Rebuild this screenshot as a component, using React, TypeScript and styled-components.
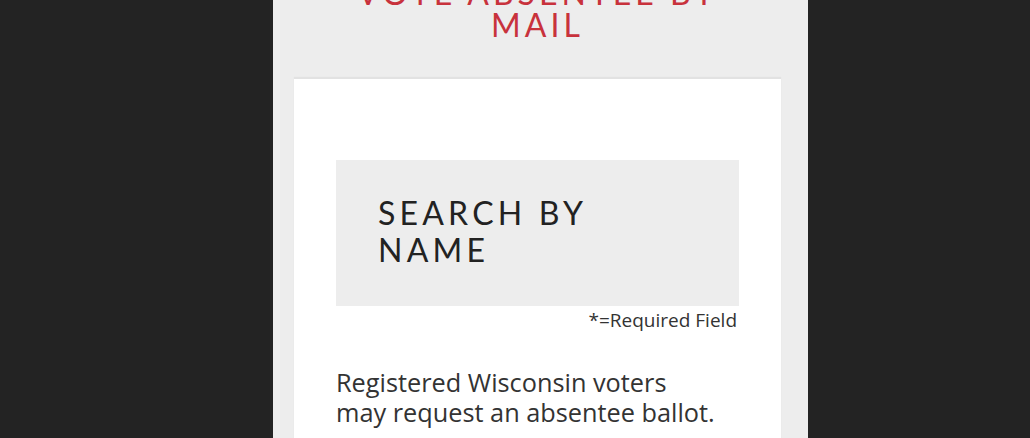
import React from "react";
import styled, { createGlobalStyle } from "styled-components";

const Global = createGlobalStyle`
  html, body { margin: 0; padding: 0; background: #232323; }
  body { height: 438px; overflow: hidden; }
`;

const Page = styled.div`
  display: flex;
  height: 438px;
  padding-left: 273px;
  background: #232323;
`;

const Column = styled.main`
  width: 535px;
  background: #ededed;
  padding: 0 27px 0 21px;
  box-sizing: border-box;
  display: flex;
  flex-direction: column;
`;

const Title = styled.h1`
  margin: -23px 0 0 0;
  font-family: "Lato", "Open Sans", sans-serif;
  font-weight: 400;
  font-size: 32px;
  line-height: 32px;
  letter-spacing: 4px;
  text-align: center;
  color: #c8323c;
`;

const Card = styled.section`
  margin-top: 36px;
  background: #fff;
  border-top: 2px solid #e2e2e2;
  box-shadow: 0 0 1px rgba(0, 0, 0, 0.06);
  padding: 81px 42px 0 42px;
  flex: 1;
`;

const SearchBox = styled.div`
  background: #ededed;
  height: 146px;
  box-sizing: border-box;
  padding: 34px 42px 0 42px;
`;

const SearchHeading = styled.h2`
  margin: 0;
  font-family: "Lato", "Open Sans", sans-serif;
  font-weight: 400;
  font-size: 32px;
  line-height: 37px;
  letter-spacing: 4.2px;
  color: #222;
`;

const Required = styled.p`
  margin: 2px 2px 0 0;
  text-align: right;
  font-family: "Open Sans", sans-serif;
  font-size: 19px;
  line-height: 24px;
  color: #333;
`;

const Intro = styled.p`
  margin: 35px 0 0 0;
  font-family: "Open Sans", sans-serif;
  font-size: 25.3px;
  line-height: 30px;
  color: #333;
`;

export default function App() {
  return (
    <>
      <Global />
      <Page>
        <Column>
          <Title>
            VOTE ABSENTEE BY
            <br />
            MAIL
          </Title>
          <Card>
            <SearchBox>
              <SearchHeading>
                SEARCH BY
                <br />
                NAME
              </SearchHeading>
            </SearchBox>
            <Required>*=Required Field</Required>
            <Intro>
              Registered Wisconsin voters
              <br />
              may request an absentee ballot.
            </Intro>
          </Card>
        </Column>
      </Page>
    </>
  );
}
